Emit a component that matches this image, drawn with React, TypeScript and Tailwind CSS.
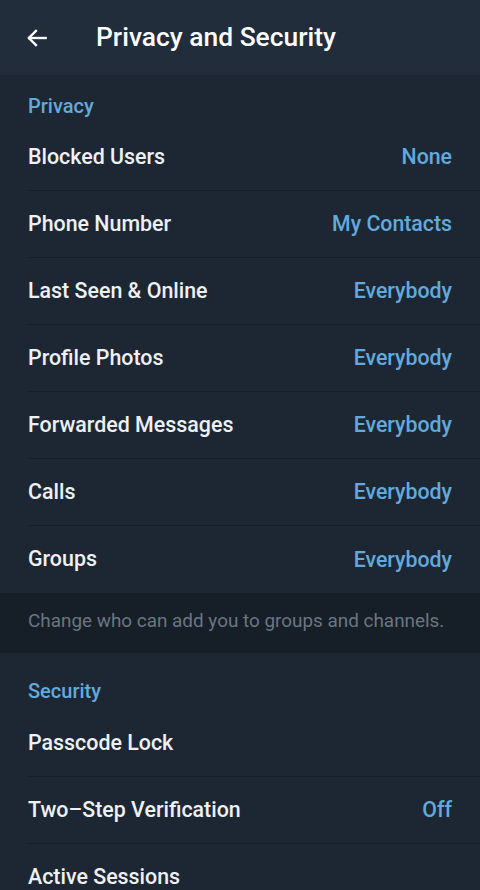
import React from 'react';

interface Item {
  label: string;
  value?: string;
}

const PRIVACY: Item[] = [
  { label: 'Blocked Users', value: 'None' },
  { label: 'Phone Number', value: 'My Contacts' },
  { label: 'Last Seen & Online', value: 'Everybody' },
  { label: 'Profile Photos', value: 'Everybody' },
  { label: 'Forwarded Messages', value: 'Everybody' },
  { label: 'Calls', value: 'Everybody' },
  { label: 'Groups', value: 'Everybody' },
];

const SECURITY: Item[] = [
  { label: 'Passcode Lock' },
  { label: 'Two\u2013Step Verification', value: 'Off' },
  { label: 'Active Sessions' },
];

const Row: React.FC<{ item: Item; last?: boolean }> = ({ item, last }) => (
  <div className="pl-7">
    <div
      className={`h-[67px] flex items-center justify-between pr-7 ${
        last ? '' : 'border-b border-[#151e28]'
      }`}
    >
      <span className="text-[21.4px] font-medium text-[#eef1f4]">{item.label}</span>
      {item.value && <span className="text-[21.3px] font-medium text-[#62aade]">{item.value}</span>}
    </div>
  </div>
);

export default function App() {
  return (
    <div className="w-[480px] h-[890px] overflow-hidden bg-[#1d2733] font-['Roboto',sans-serif]">
      {/* Header */}
      <div className="h-[75px] bg-[#212d3b] flex items-center">
        <button className="w-[96px] pl-[24px] flex items-center text-white">
          <svg width="26" height="26" viewBox="0 0 24 24" fill="none" stroke="currentColor" strokeWidth="2.2" strokeLinecap="square">
            <path d="M20 12H5" />
            <path d="M11 5.5L4.5 12L11 18.5" />
          </svg>
        </button>
        <h1 className="text-[26.4px] font-medium text-white">Privacy and Security</h1>
      </div>

      {/* Privacy */}
      <div className="pt-[19px]">
        <div className="px-7 text-[20px] font-medium text-[#62aade] leading-[24px]">Privacy</div>
        <div className="mt-[6px]">
          {PRIVACY.map((item, i) => (
            <Row key={item.label} item={item} last={i === PRIVACY.length - 1} />
          ))}
        </div>
      </div>

      <div className="h-[60px] bg-[#161e27] px-7 flex items-center">
        <p className="text-[18.9px] text-[#6b7682] whitespace-nowrap -mt-[3px]">Change who can add you to groups and channels.</p>
      </div>

      {/* Security */}
      <div className="pt-[26px]">
        <div className="px-7 text-[20px] font-medium text-[#62aade] leading-[24px]">Security</div>
        <div className="mt-[7px]">
          {SECURITY.map((item, i) => (
            <Row key={item.label} item={item} last={i === SECURITY.length - 1} />
          ))}
        </div>
      </div>
    </div>
  );
}
